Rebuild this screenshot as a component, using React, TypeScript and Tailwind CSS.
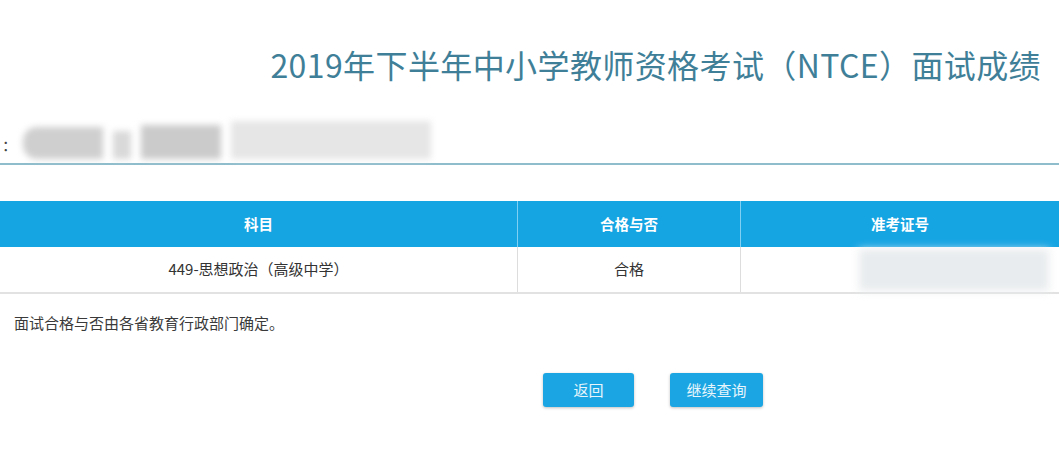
export default function App() {
  const font = { fontFamily: '"Noto Sans CJK SC", "Noto Sans", sans-serif' };

  return (
    <div className="w-[1059px] h-[460px] bg-white overflow-hidden text-[#333]" style={font}>
      {/* title */}
      <div className="flex justify-end pr-[18px] pt-[44px] h-[86px]">
        <h1 className="text-[32px] leading-[40px] text-[#3f8098] tracking-[0.4px]">
          2019年下半年中小学教师资格考试（NTCE）面试成绩
        </h1>
      </div>

      {/* candidate info (blurred) */}
      <div className="relative h-[77px]">
        <div className="flex items-end h-full pb-[4px] pl-[2px] gap-[6px]">
          <span className="text-[15px] leading-[20px] text-[#444] pb-[4px]">：</span>
          <div className="flex items-end gap-[10px] blur-[3px]">
            <div className="w-[80px] h-[32px] bg-[#cfcfcf] rounded-l-[14px]" />
            <div className="w-[18px] h-[28px] bg-[#d9d9d9]" />
            <div className="w-[80px] h-[34px] bg-[#cbcbcb]" />
            <div className="w-[200px] h-[38px] bg-[#e6e6e6]" />
          </div>
        </div>
      </div>
      <div className="h-[2px] bg-[#8fbdcc]" />

      {/* results table */}
      <div className="mt-[36px]">
        <div className="grid grid-cols-[518px_223px_1fr] h-[46px] bg-[#16a5e3] text-white text-[14.5px] font-bold">
          <div className="flex items-center justify-center border-r border-[#7fd0f2]">科目</div>
          <div className="flex items-center justify-center border-r border-[#7fd0f2]">合格与否</div>
          <div className="flex items-center justify-center">准考证号</div>
        </div>
        <div className="grid grid-cols-[518px_223px_1fr] h-[47px] border-b-2 border-[#e2e2e2] text-[15px] text-[#333]">
          <div className="flex items-center justify-center border-r border-[#dddddd]">449-思想政治（高级中学）</div>
          <div className="flex items-center justify-center border-r border-[#dddddd]">合格</div>
          <div className="flex items-center pl-[118px]">
            <div className="w-[190px] h-[42px] bg-[#e9ecee] blur-[4px]" />
          </div>
        </div>
      </div>

      {/* note */}
      <p className="pl-[14px] pt-[18px] text-[15px] leading-[22px] text-[#3a3a3a]">
        面试合格与否由各省教育行政部门确定。
      </p>

      {/* actions */}
      <div className="flex pl-[543px] gap-[36px] mt-[39px]">
        <button className="w-[91px] h-[34px] rounded-[3px] bg-[#1ba5e2] text-white/90 text-[15px] shadow-[0_1px_3px_rgba(0,0,0,0.25)]">
          返回
        </button>
        <button className="w-[93px] h-[34px] rounded-[3px] bg-[#1ba5e2] text-white/90 text-[15px] shadow-[0_1px_3px_rgba(0,0,0,0.25)]">
          继续查询
        </button>
      </div>
    </div>
  );
}
